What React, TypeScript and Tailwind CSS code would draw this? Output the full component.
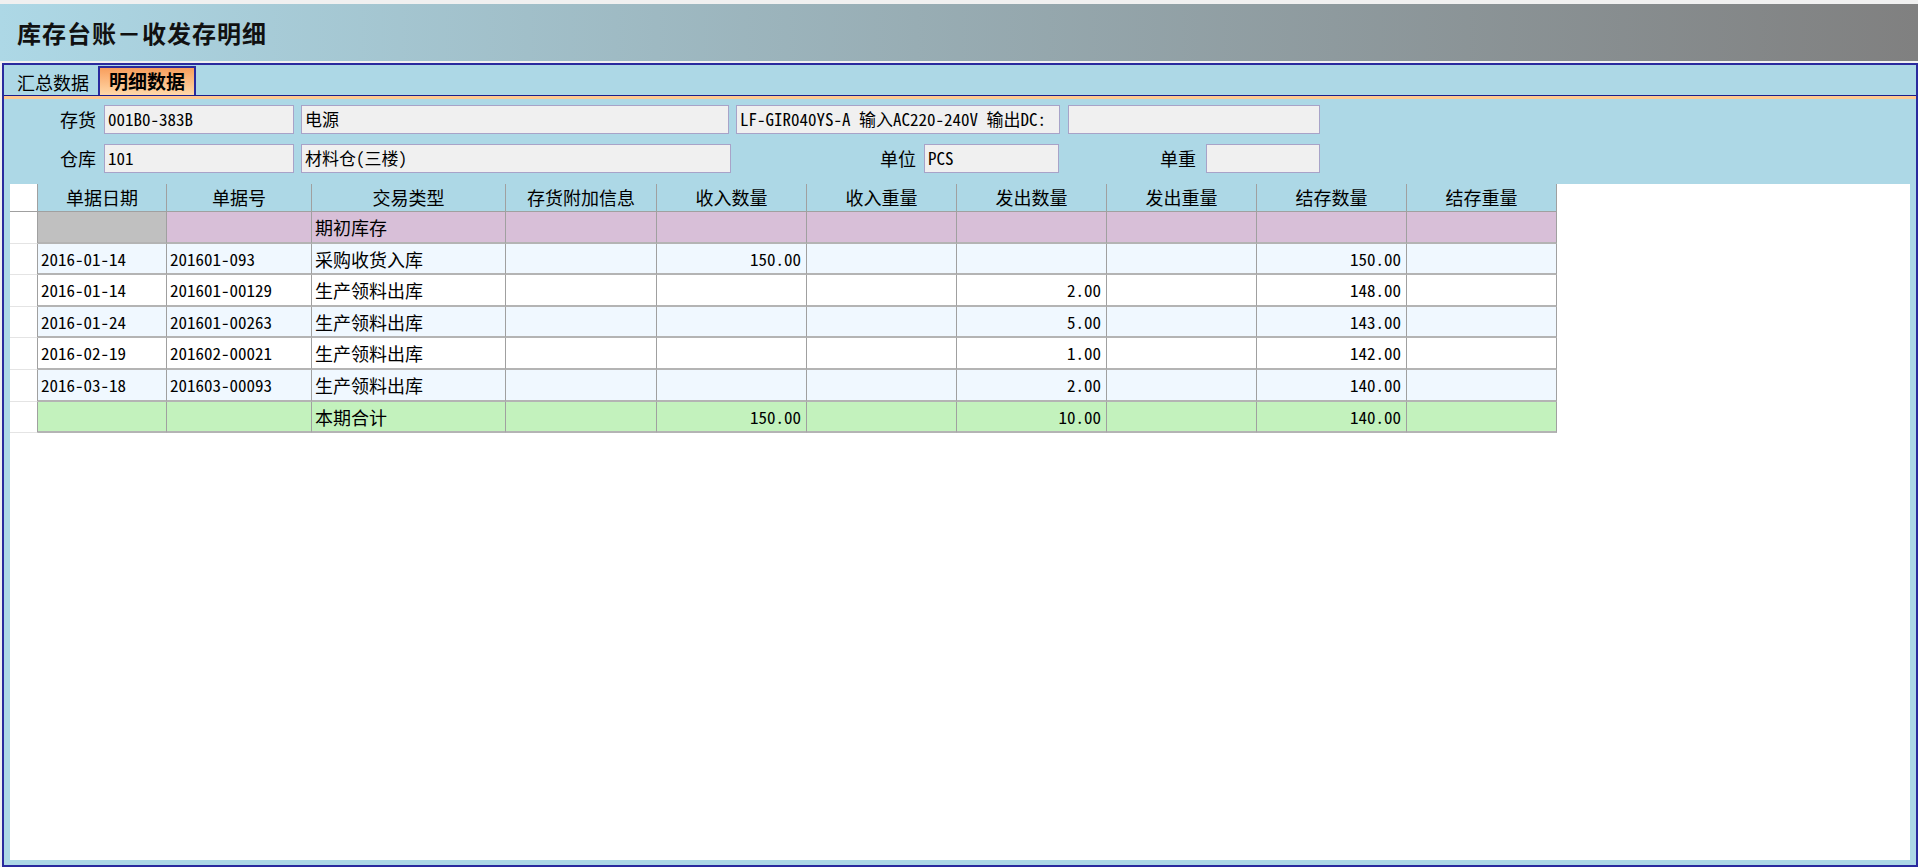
const cjk = "font-['Noto_Sans_CJK_SC','Noto_Sans',sans-serif]";
const mono = "font-['Noto_Sans_Mono_CJK_SC','Liberation_Mono','Noto_Sans_CJK_SC',monospace]";

const columns = ["单据日期", "单据号", "交易类型", "存货附加信息", "收入数量", "收入重量", "发出数量", "发出重量", "结存数量", "结存重量"];

type Row = { kind: "open" | "odd" | "even" | "total"; cells: string[] };

const rows: Row[] = [
  { kind: "open", cells: ["", "", "期初库存", "", "", "", "", "", "", ""] },
  { kind: "odd", cells: ["2016-01-14", "201601-093", "采购收货入库", "", "150.00", "", "", "", "150.00", ""] },
  { kind: "even", cells: ["2016-01-14", "201601-00129", "生产领料出库", "", "", "", "2.00", "", "148.00", ""] },
  { kind: "odd", cells: ["2016-01-24", "201601-00263", "生产领料出库", "", "", "", "5.00", "", "143.00", ""] },
  { kind: "even", cells: ["2016-02-19", "201602-00021", "生产领料出库", "", "", "", "1.00", "", "142.00", ""] },
  { kind: "odd", cells: ["2016-03-18", "201603-00093", "生产领料出库", "", "", "", "2.00", "", "140.00", ""] },
  { kind: "total", cells: ["", "", "本期合计", "", "150.00", "", "10.00", "", "140.00", ""] },
];

const rowBg: Record<Row["kind"], string> = {
  open: "bg-[#d8bfd8]",
  odd: "bg-[#f0f8ff]",
  even: "bg-white",
  total: "bg-[#c3f2bd]",
};

function Field({ value, className }: { value: string; className: string }) {
  return (
    <div
      className={`h-[29px] shrink-0 overflow-hidden whitespace-nowrap border border-[#a8a3c8] bg-[#f0f0f0] pl-[3px] pt-[2px] text-[17px] leading-[22px] text-black ${mono} ${className}`}
    >
      {value}
    </div>
  );
}

function Label({ text, className }: { text: string; className: string }) {
  return <div className={`shrink-0 text-right text-[18px] leading-[29px] text-black ${cjk} ${className}`}>{text}</div>;
}

export default function App() {
  return (
    <div className="flex h-[867px] w-full flex-col overflow-hidden bg-[#f0f0f0] pt-[4px]">
      {/* title bar */}
      <div className="flex h-[57px] shrink-0 items-center bg-gradient-to-r from-[#add8e6] to-[#808080] pl-[17px]">
        <h1 className={`text-[24px] font-bold tracking-[1px] text-[#111] ${cjk}`}>库存台账－收发存明细</h1>
      </div>

      <div className="mt-[2px] ml-[2px] flex min-h-0 flex-1 flex-col border-2 border-[#2a2a9e] bg-[#add8e6]">
        {/* tabs */}
        <div className="flex h-[31px] shrink-0 items-end border-b border-[#1c1c8c] pl-[8px]">
          <div className={`px-[5px] pb-[1px] text-[18px] leading-[24px] text-black ${cjk}`}>汇总数据</div>
          <div
            className={`ml-[4px] h-[29px] border-x-2 border-t-2 border-[#2a2a9e] bg-gradient-to-b from-[#f89e5c] to-[#ffd8a8] px-[9px] text-[19px] font-bold leading-[26px] text-black ${cjk}`}
          >
            明细数据
          </div>
        </div>
        <div className="h-[3px] shrink-0 bg-[#ffc890]" />

        {/* form */}
        <div className="flex shrink-0 flex-col gap-[10px] pt-[6px] pb-[11px]">
          <div className="flex items-center">
            <Label text="存货" className="w-[92px]" />
            <Field value="001B0-383B" className="ml-[8px] w-[190px]" />
            <Field value="电源" className="ml-[7px] w-[428px]" />
            <Field value="LF-GIR040YS-A 输入AC220-240V 输出DC:" className="ml-[7px] w-[324px]" />
            <Field value="" className="ml-[8px] w-[252px]" />
          </div>
          <div className="flex items-center">
            <Label text="仓库" className="w-[92px]" />
            <Field value="101" className="ml-[8px] w-[190px]" />
            <Field value="材料仓(三楼)" className="ml-[7px] w-[430px]" />
            <Label text="单位" className="w-[185px]" />
            <Field value="PCS" className="ml-[8px] w-[135px]" />
            <Label text="单重" className="w-[137px]" />
            <Field value="" className="ml-[10px] w-[114px]" />
          </div>
        </div>

        {/* grid */}
        <div className="mx-[6px] mb-[5px] min-h-0 flex-1 bg-white">
          <div className="grid w-max grid-cols-[28px_129px_145px_194px_151px_150px_150px_150px_150px_150px_150px]">
            <div className="h-[28px] border-r border-b border-[#a0a0a0] bg-white" />
            {columns.map((c) => (
              <div
                key={c}
                className={`h-[28px] border-r border-b border-[#a0a0a0] bg-[#add8e6] text-center text-[18px] leading-[27px] text-black ${cjk}`}
              >
                {c}
              </div>
            ))}
            {rows.map((row, ri) => (
              <RowCells key={ri} row={row} />
            ))}
          </div>
        </div>
      </div>
    </div>
  );
}

function RowCells({ row }: { row: Row }) {
  return (
    <>
      <div className="h-[31.6px] border-r border-b border-[#a0a0a0] border-b-[#e4e4e4] bg-white" />
      {row.cells.map((v, i) => {
        const numeric = /^\d+\.\d+$/.test(v);
        const isCjk = /[\u4e00-\u9fff]/.test(v);
        const bg = row.kind === "open" && i === 0 ? "bg-[#c0c0c0]" : rowBg[row.kind];
        return (
          <div
            key={i}
            className={`h-[31.6px] overflow-hidden whitespace-nowrap border-r border-b-2 border-[#b4b4b4] border-r-[#a0a0a0] px-[3px] leading-[30px] text-black ${bg} ${
              numeric ? "text-right pr-[5px]" : "text-left"
            } ${isCjk ? `text-[18px] ${cjk}` : `text-[17px] ${mono}`}`}
          >
            {v}
          </div>
        );
      })}
    </>
  );
}
